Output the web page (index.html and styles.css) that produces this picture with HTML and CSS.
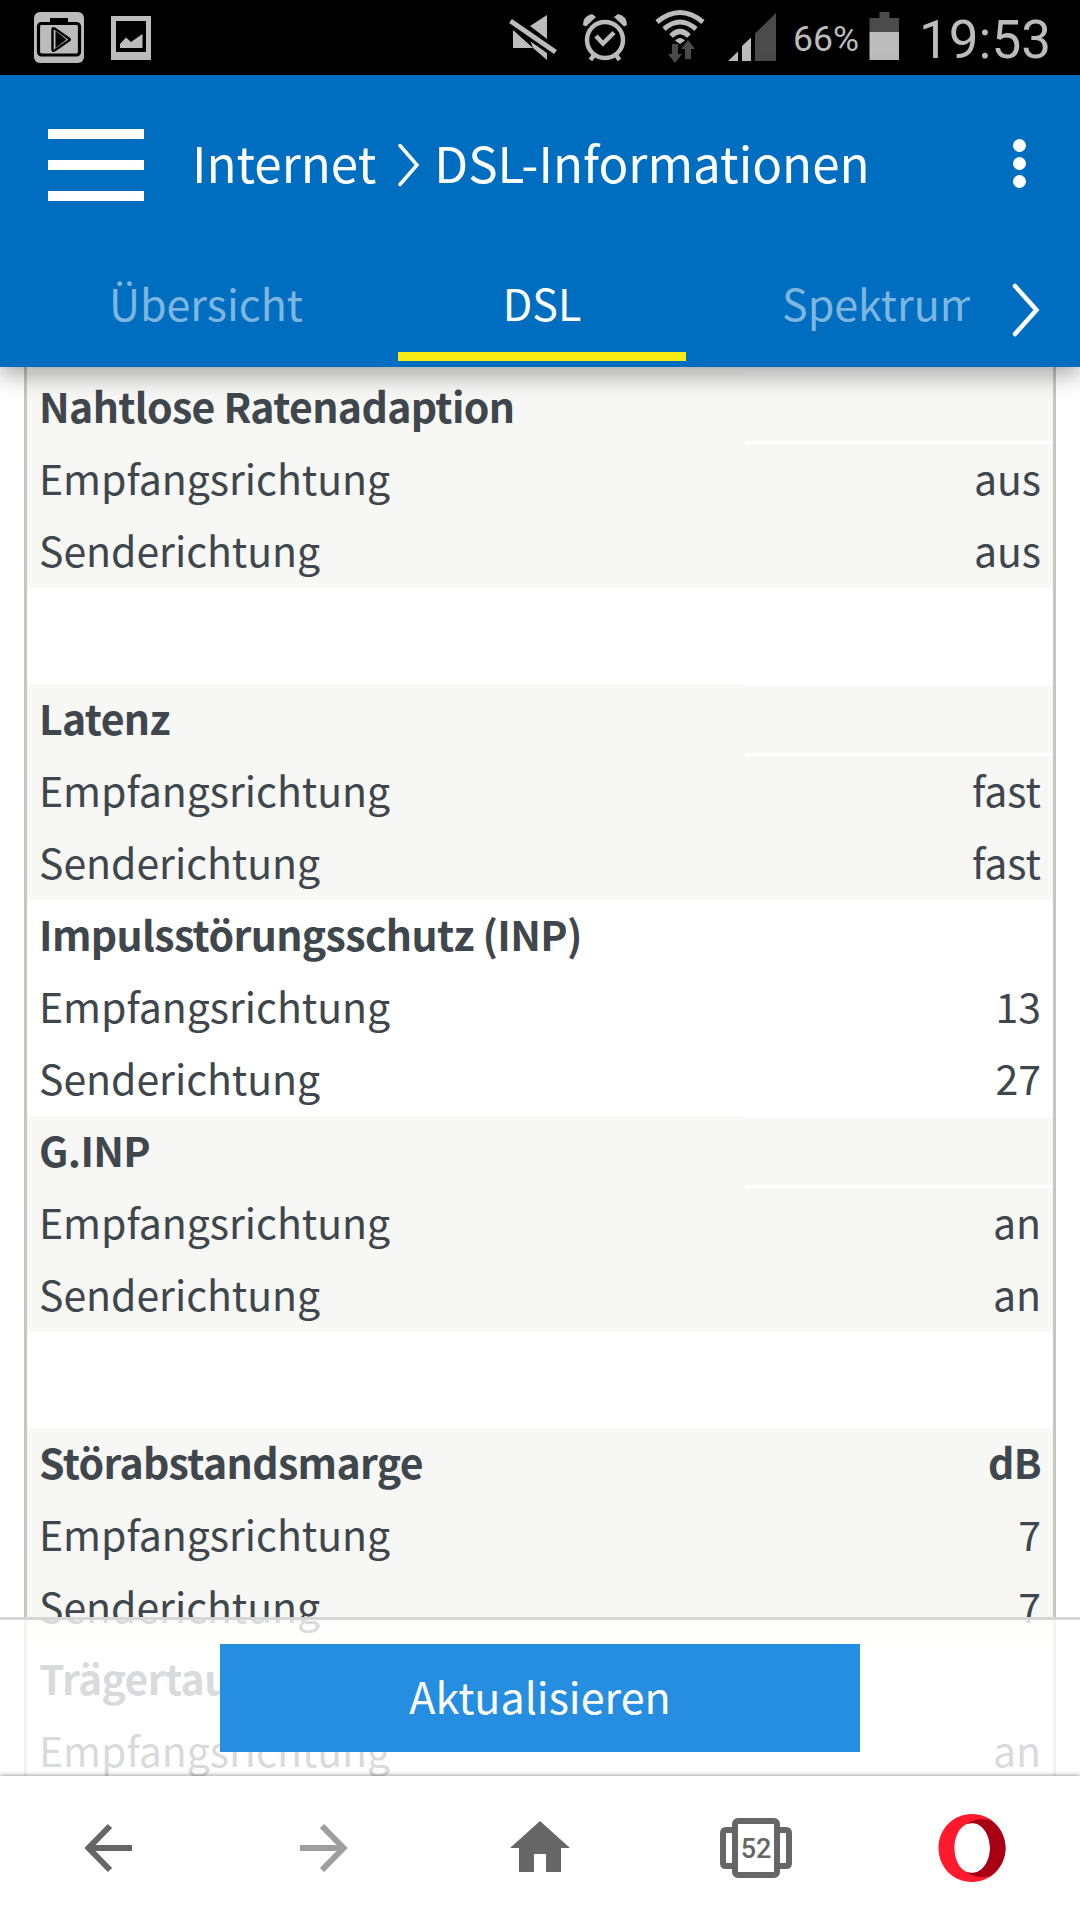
FILE: index.html
```html
<!DOCTYPE html>
<html lang="de">
<head>
  <meta charset="utf-8">
  <meta name="viewport" content="width=device-width, initial-scale=1">
  <title>DSL-Informationen</title>
  <link rel="stylesheet" href="styles.css">
</head>
<body>
  <div class="phone">
    <div class="statusbar">
      <svg class="status-icons" width="1080" height="75" viewBox="0 0 1080 75">
        <!-- play store -->
        <rect x="34" y="12" width="50" height="51" rx="6" fill="#bcbcbc"/>
        <path d="M52 22v-2h14v2" fill="none" stroke="#000" stroke-width="4"/>
        <rect x="38.500" y="23.500" width="41" height="31.500" rx="3" fill="none" stroke="#000" stroke-width="3.200"/>
        <path d="M52.500 29.500q0-2 2-1l14.500 10q1.500 1 0 2l-14.500 10q-2 1-2-1z" fill="none" stroke="#000" stroke-width="2.400" stroke-linejoin="round"/>
        <path d="M55.500 31v17l11-8.500z" fill="#000"/>
        <!-- picture -->
        <path fill-rule="evenodd" d="M111 16h40v44h-40zM116 21v31h30v-31z" fill="#bcbcbc"/>
        <path d="M120 48v-4l6-6.500 5 4.500 11.500-8v14z" fill="#bcbcbc"/>
        <!-- sound off -->
        <path d="M513 30l20 18h-20zM533 48l14 12v-7l-17-13zM547 15v24l-17-13z" fill="#bcbcbc"/>
        <path d="M510.500 21L555.500 52" stroke="#000" stroke-width="11"/>
        <path d="M510.500 21L555.500 52" stroke="#bcbcbc" stroke-width="5"/>
        <!-- alarm -->
        <circle cx="605" cy="40" r="18" fill="none" stroke="#bcbcbc" stroke-width="4.500"/>
        <path d="M596 36l7 7.500 11-11" fill="none" stroke="#bcbcbc" stroke-width="4.500"/>
        <path d="M583 25q0-9 9-11l4 3-10 9.500zM627 25q0-9-9-11l-4 3 10 9.500z" fill="#bcbcbc"/>
        <path d="M594 55l-3.500 5M616 55l3.500 5" stroke="#bcbcbc" stroke-width="4.500"/>
        <!-- wifi -->
        <g fill="none" stroke="#bcbcbc" stroke-width="5">
          <path d="M657 22q23-19 46 0"/>
          <path d="M664 29q16-14 32 0"/>
          <path d="M671 36q9-9 18 0"/>
        </g>
        <path d="M675 40.500q5-5 10 0l-5 3.500z" fill="#bcbcbc"/>
        <path d="M672 44h6v10h4l-7 9-7-9h4zM685 59v-10h-4l7-9 7 9h-4v10z" fill="#4b4b4b"/>
        <!-- signal -->
        <path d="M728 61l10-9.500v9.500zM742 61v-15l9-8.500v23.500z" fill="#bcbcbc"/>
        <path d="M755 61v-27.500l21-20.500v48z" fill="#4b4b4b"/>
        <!-- battery -->
        <path d="M869.500 32v-14h10v-6h10v6h9.500v14z" fill="#4b4b4b"/>
        <path d="M869.500 32h29.500v28h-29.500z" fill="#bcbcbc"/>
      </svg>
      <span class="percent">66%</span>
      <span class="clock">19:53</span>
    </div>

    <header class="header">
      <div class="titlebar">
        <div class="burger"><i></i><i></i><i></i></div>
        <h1 class="title">
          <span class="crumb">Internet</span>
          <svg class="crumb-arrow" width="22" height="44" viewBox="0 0 22 44"><path d="M2 2.500L19 22 2 41.500" fill="none" stroke="#fff" stroke-width="3.500" stroke-linecap="round"/></svg>
          <span class="crumb">DSL-Informationen</span>
        </h1>
        <div class="dots"><i></i><i></i><i></i></div>
      </div>
      <nav class="tabs">
        <div class="tab"><span>Übersicht</span></div>
        <div class="tab active"><span>DSL</span></div>
        <div class="tab last"><span>Spektrum</span></div>
        <svg class="tab-next" width="28" height="54" viewBox="0 0 28 54"><path d="M3 3L24.500 27 3 51" fill="none" stroke="#fff" stroke-width="4.500" stroke-linecap="round"/></svg>
      </nav>
    </header>

    <main class="content">
      <div class="table">
        <div class="row head grey"><b>Nahtlose Ratenadaption</b><b class="empty"></b></div>
        <div class="row grey"><span>Empfangsrichtung</span><span>aus</span></div>
        <div class="row grey"><span>Senderichtung</span><span>aus</span></div>
        <div class="gap"></div>
        <div class="row head grey"><b>Latenz</b><b class="empty"></b></div>
        <div class="row grey"><span>Empfangsrichtung</span><span>fast</span></div>
        <div class="row grey"><span>Senderichtung</span><span>fast</span></div>
        <div class="row head"><b>Impulsstörungsschutz (INP)</b></div>
        <div class="row"><span>Empfangsrichtung</span><span>13</span></div>
        <div class="row"><span>Senderichtung</span><span>27</span></div>
        <div class="row head grey"><b>G.INP</b><b class="empty"></b></div>
        <div class="row grey"><span>Empfangsrichtung</span><span>an</span></div>
        <div class="row grey"><span>Senderichtung</span><span>an</span></div>
        <div class="gap"></div>
        <div class="row head grey"><b>Störabstandsmarge</b><b>dB</b></div>
        <div class="row grey"><span>Empfangsrichtung</span><span>7</span></div>
        <div class="row grey"><span>Senderichtung</span><span>7</span></div>
        <div class="row head"><b>Trägertausch</b></div>
        <div class="row"><span>Empfangsrichtung</span><span>an</span></div>
      </div>
    </main>

    <div class="actions">
      <button type="button" class="refresh">Aktualisieren</button>
    </div>

    <footer class="browserbar">
      <div class="item"><svg width="72" height="72" viewBox="0 0 72 72"><path d="M38 14L16.500 36l21.500 22M16 36H60" fill="none" stroke="#666" stroke-width="6"/></svg></div>
      <div class="item"><svg width="72" height="72" viewBox="0 0 72 72"><path d="M34 14L55.500 36l-21.500 22M56 36H12" fill="none" stroke="#9e9e9e" stroke-width="6"/></svg></div>
      <div class="item"><svg width="72" height="72" viewBox="0 0 72 72"><path d="M36 9L6 36h9v24h15V42h12v18h15V36h9z" fill="#666"/></svg></div>
      <div class="item">
        <svg width="72" height="72" viewBox="0 0 72 72">
          <g fill="none" stroke="#666" stroke-width="6">
            <rect x="15" y="9" width="42" height="54" rx="3"/>
            <path d="M12 18H6q-3 0-3 3v30q0 3 3 3h6M60 18h6q3 0 3 3v30q0 3-3 3h-6"/>
          </g>
          <text x="36" y="45.500" text-anchor="middle" class="tab-count">52</text>
        </svg>
      </div>
      <div class="item">
        <svg width="72" height="72" viewBox="0 0 72 72">
          <path fill-rule="evenodd" d="M36 2C17 2 2.500 17 2.500 36S17 70 36 70 69.500 55 69.500 36 55 2 36 2zM36 11c10 0 18 11 18 25s-8 25-18 25-17.500-11-17.500-25S26 11 36 11z" fill="#ff1b2d"/>
          <path d="M30 12.500C36 7 48 5 56 9c8 6 13.500 16 13.500 27S64 57 56 63c-8 4-20 2-26-3.500 3 1.500 5 1.500 6 1.500 10 0 18-11 18-25S46 11 36 11c-2 0-4 .5-6 1.500z" fill="#a70014"/>
        </svg>
      </div>
    </footer>
  </div>
</body>
</html>
```
FILE: styles.css
```css
*{
  box-sizing: border-box;
}
body{
  margin: 0;
  background: #fff;
  font-family: "Noto Sans CJK JP", "Noto Sans", sans-serif;
  color: #3f464c;
}
.phone{
  width: 1080px;
  height: 1920px;
  display: flex;
  flex-direction: column;
  overflow: hidden;
  position: relative;
}
svg{
  display: block;
}

/* status bar */
.statusbar{
  height: 75px;
  flex: none;
  display: flex;
  justify-content: flex-end;
  align-items: center;
  padding-right: 29px;
  background: #000;
  color: #bcbcbc;
  font-family: Roboto, sans-serif;
  position: relative;
}
.status-icons{
  position: absolute;
  left: 0;
  top: 0;
}
.percent{
  width: 126px;
  font-size: 35.5px;
  line-height: 75px;
  padding-top: 4px;
}
.clock{
  font-size: 53px;
  line-height: 75px;
  padding-top: 5px;
}

/* blue header */
.header{
  height: 292px;
  flex: none;
  background: #006ec0;
  color: #fff;
  box-shadow: 0 6px 24px rgba(0,0,0,.4);
  position: relative;
  z-index: 1;
}
.titlebar{
  height: 180px;
  display: flex;
  align-items: center;
  padding: 0 54px 0 48px;
}
.burger{
  width: 96px;
  display: flex;
  flex-direction: column;
  gap: 21px;
}
.burger i{
  height: 10px;
  background: #fff;
}
.title{
  flex: 1;
  display: flex;
  align-items: center;
  margin: 0 0 0 48px;
  font-size: 49.3px;
  font-weight: normal;
  line-height: 72px;
  white-space: nowrap;
}
.crumb{
  padding-bottom: 6px;
}
.crumb-arrow{
  margin: 0 14px 0 22px;
}
.dots{
  display: flex;
  flex-direction: column;
  gap: 5px;
  padding-bottom: 3px;
}
.dots i{
  width: 13px;
  height: 13px;
  border-radius: 50%;
  background: #fff;
}
.tabs{
  height: 112px;
  display: flex;
  padding-left: 62px;
}
.tab{
  width: 288px;
  height: 106px;
  margin-right: 48px;
  border-bottom: 9px solid transparent;
  text-align: center;
  font-size: 43px;
  line-height: 95px;
  color: #7fb6df;
}
.tab.active{
  color: #fff;
  border-bottom-color: #f8ec17;
}
.tab.last{
  width: 236px;
  margin-right: 42px;
  padding-left: 48px;
  text-align: left;
  overflow: hidden;
}
.tab-next{
  margin-top: 28px;
}

/* table */
.content{
  height: 1409px;
  flex: none;
  overflow: hidden;
  padding: 0 24px;
}
.table{
  padding-top: 5px;
  border: solid #c6c7be;
  border-width: 0 3px;
  font-size: 41px;
  letter-spacing: -.05px;
}
.row{
  height: 72px;
  display: flex;
  justify-content: space-between;
  padding: 0 12px;
  line-height: 66px;
}
.head b{
  letter-spacing: -.65px;
}
.grey{
  background: #f7f7f5;
}
.row .empty{
  width: 308px;
  margin-right: -12px;
  border: solid #fff;
  border-width: 2px 0 3px;
}
.gap{
  height: 96px;
}

/* refresh button */
.actions{
  position: absolute;
  left: 0;
  right: 0;
  top: 1617px;
  height: 159px;
  padding-top: 24px;
  border-top: 3px solid #d6d6d6;
  background: rgba(255,255,255,.8);
  text-align: center;
}
.refresh{
  width: 640px;
  height: 108px;
  padding: 0 0 6px;
  border: none;
  background: #268ee0;
  color: #fff;
  font-family: inherit;
  font-size: 43px;
}

/* browser bar */
.browserbar{
  height: 144px;
  flex: none;
  display: grid;
  grid-template-columns: repeat(5, 1fr);
  background: #fff;
  box-shadow: 0 0 5px rgba(0,0,0,.5);
  position: relative;
  z-index: 2;
}
.item{
  display: flex;
  align-items: center;
  justify-content: center;
}
.tab-count{
  font-family: Roboto, sans-serif;
  font-size: 27px;
  font-weight: 500;
  fill: #666;
}
```
